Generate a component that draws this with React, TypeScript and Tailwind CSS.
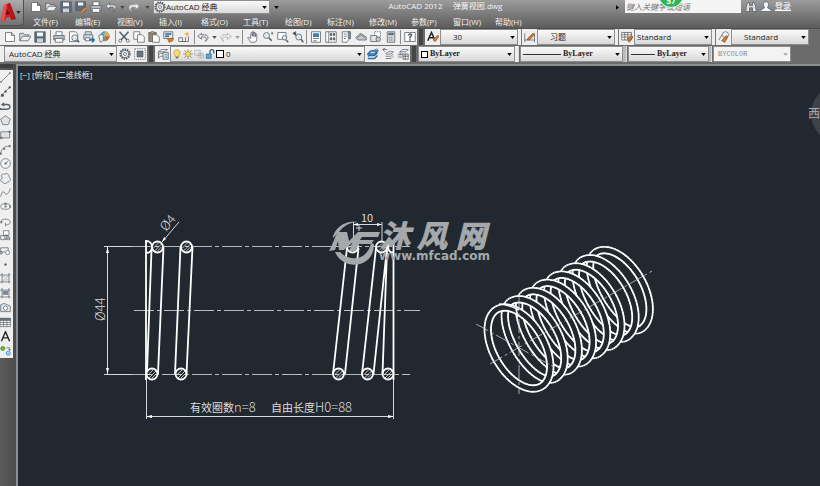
import type { ReactNode } from "react";

const UI_FONT = "font-['Open_Sans','Noto_Sans_CJK_SC',sans-serif]";

type IconName = keyof typeof ICONS;

// 16x16 drawings, dark strokes by default
const ICONS = {
  newFile: <path d="M2 2h8l4 4v8H2z M10 2v4h4" fill="#fff" />,
  open: (
    <>
      <path d="M1 13V3h5l1 2h6v2" fill="#d5dade" />
      <path d="M1 13l4-6h11l-4 6z" fill="#eef0f2" />
    </>
  ),
  save: (
    <>
      <path d="M1 1h14v14H1z" fill="#5b6b7c" />
      <path d="M4 2h8v5H4z" fill="#f4f6f8" stroke="none" />
      <path d="M4 10h8v5H4z" fill="#c9d2da" stroke="none" />
    </>
  ),
  saveAs: (
    <>
      <path d="M1 1h13v12H1z" fill="#5b6b7c" />
      <path d="M4 2h7v4H4z" fill="#f4f6f8" stroke="none" />
      <path d="M7 15l7-7 2 2-7 6z" fill="#e39a3b" stroke="#a4621c" />
    </>
  ),
  print: (
    <>
      <path d="M4 6V1h8v5" fill="#fff" />
      <path d="M1 6h14v6H1z" fill="#b4bac0" />
      <path d="M3 10h10v5H3z" fill="#fff" />
    </>
  ),
  preview: (
    <>
      <path d="M2 1h8l3 3v10H2z" fill="#fff" />
      <circle cx="9" cy="9" r="4" fill="#dfeaf3" />
      <path d="M12 12l3 3" strokeWidth="2" />
    </>
  ),
  publish: (
    <>
      <path d="M3 5V1h8v4 M1 5h12v6H1z" fill="#d7dbdf" />
      <path d="M3 9h6v4H3z" fill="#fff" />
      <path d="M8 12h7M12 9l3 3-3 3" stroke="#1c6fb8" strokeWidth="2" />
    </>
  ),
  globe: (
    <>
      <circle cx="9" cy="7" r="6" fill="#6db6e8" stroke="#3c7bb0" />
      <path d="M9 1a6 6 0 0 1 6 6H9z" fill="#e4b23c" stroke="none" />
      <path d="M9 7h6a6 6 0 0 1-5 6z" fill="#d9603f" stroke="none" />
      <path d="M1 6l6-2v9l-4 2z" fill="#f4f6f8" />
      <path d="M9 7l1 6-3 0z" fill="#60a84c" stroke="none" />
    </>
  ),
  cut: (
    <>
      <path d="M2 1l10 11M14 1L4 12" strokeWidth="2" />
      <circle cx="3" cy="13" r="2" />
      <circle cx="13" cy="13" r="2" />
    </>
  ),
  copy: (
    <>
      <path d="M1 1h8v10H1z" fill="#fff" />
      <path d="M6 5h6l3 3v7H6z" fill="#fff" />
    </>
  ),
  paste: (
    <>
      <path d="M1 2h10v12H1z" fill="#a5825a" />
      <path d="M4 1h4v2H4z" fill="#dfe3e6" />
      <path d="M6 5h6l3 3v7H6z" fill="#fff" />
    </>
  ),
  match: (
    <>
      <path d="M1 1h12v9H1z" fill="#dfe7ee" />
      <path d="M3 4h8M3 7h5" stroke="#33628f" strokeWidth="2" />
      <path d="M6 10h8l-1 3-5 2z" fill="#d98332" stroke="#9a531a" />
    </>
  ),
  block: (
    <>
      <path d="M1 9h5v5H1zM10 8v6H6" />
      <path d="M4 14h10V7" />
      <path d="M12 0l1 3 3 1-3 1-1 3-1-3-3-1 3-1z" fill="#f3a33c" stroke="none" />
    </>
  ),
  undo: <path d="M6 3L1 7l5 4V8h4c3 0 3 4 1 6 5-3 5-9-1-9H6z" fill="#e4e7ea" />,
  redo: <path d="M10 3l5 4-5 4V8H6c-3 0-3 4-1 6C0 11 0 5 6 5h4z" fill="#f1f1f1" stroke="#a2a6aa" />,
  hand: <path d="M5 15L1 9l1-1 3 2V3l1-1 1 1v4-6h2v6-5h2v6-4h2v8l-2 3z" fill="#fff" />,
  zoomRt: (
    <>
      <circle cx="6" cy="6" r="4" fill="#dfe8ef" />
      <path d="M9 9l4 4" strokeWidth="2" />
      <path d="M12 3h3M13.500 1v4" />
    </>
  ),
  zoomWin: (
    <>
      <path d="M1 2h11v9H1z" fill="#fff" />
      <circle cx="10" cy="9" r="3" fill="#dfe8ef" />
      <path d="M12 12l3 3" strokeWidth="2" />
    </>
  ),
  zoomPrev: (
    <>
      <circle cx="9" cy="8" r="4" fill="#dfe8ef" />
      <path d="M12 11l3 4" strokeWidth="2" />
      <path d="M1 3l4-2v5z" fill="#33383d" />
    </>
  ),
  props: (
    <>
      <path d="M2 1h12v14H2z" fill="#fff" />
      <path d="M4 3h8v5H4z" fill="#3d7fb8" stroke="none" />
      <path d="M4 10h8M4 13h5" />
    </>
  ),
  center: (
    <>
      <path d="M1 1h14v14H1zM5 1v14" fill="#fff" />
      <path d="M7 3h2v3H7zM11 3h2v3h-2zM7 9h2v3H7zM11 9h2v3h-2z" fill="#5b6b7c" />
    </>
  ),
  palettes: (
    <>
      <path d="M3 1h10v9l-4 5H3z" fill="#fff" />
      <path d="M11 1h3v9h-3z" fill="#8793a0" />
      <path d="M5 4h4M5 7h4M5 10h3" />
    </>
  ),
  sheets: (
    <>
      <path d="M1 9l6-6 8 5v4H4z" fill="#c4c9ce" />
      <path d="M3 9l5-4 5 4" />
    </>
  ),
  markup: (
    <>
      <path d="M6 1h8v7H6z" fill="#fff" strokeDasharray="2 1" />
      <path d="M1 6h8v8H1z" fill="#e3e6e9" />
      <circle cx="11" cy="11" r="3" fill="#c6ccd2" />
    </>
  ),
  calc: (
    <>
      <path d="M3 1h10v14H3z" fill="#d5dade" />
      <path d="M5 3h6v2H5z" fill="#5b6b7c" />
      <path d="M5 9h6M5 12h6" strokeDasharray="2 1" />
    </>
  ),
  help: (
    <>
      <path d="M1 2h14v12H1z" fill="#fff" />
      <path d="M6 6c0-3 5-2 4 0L8 8v2M8 11v2" strokeWidth="2" />
    </>
  ),
  gear: (
    <>
      <circle cx="8" cy="8" r="6" fill="#e8eaec" strokeWidth="3" strokeDasharray="2 1" />
      <circle cx="8" cy="8" r="5" fill="#eef0f2" />
      <circle cx="8" cy="8" r="2" fill="#fff" />
    </>
  ),
  workspace: (
    <>
      <path d="M1 1h14v14H1z" fill="#fff" strokeDasharray="2 1" />
      <path d="M4 4h8v8H4z" fill="#68737e" />
    </>
  ),
  layers: (
    <>
      <path d="M2 5l4-3h8l-4 3zM2 9l3-2h5M2 13l3-2h3M2 5v9" fill="#fff" />
      <path d="M8 6h7v9H8z" fill="#dfe6ec" />
      <path d="M10 9h4M10 12h4" stroke="#2a6ca8" />
    </>
  ),
  layerCur: (
    <>
      <path d="M1 8l4-4h9l-4 4z" fill="#cfe3f3" stroke="#2a6ca8" strokeWidth="2" />
      <path d="M1 11l2-1h7l4-4M1 14h9l4-4" stroke="#2a6ca8" strokeWidth="2" />
      <path d="M8 4l5-3 2 2" />
    </>
  ),
  layerPrev: (
    <>
      <path d="M5 8l3-3h7l-3 3zM5 11h7l3-3M5 14h7l3-3" fill="#fff" />
      <path d="M1 2h6M1 2l3-2M1 2l3 3" />
    </>
  ),
  layerState: (
    <>
      <path d="M4 5l3-3h8l-3 3zM4 5v3h4M1 9h6M1 12h6" fill="#fff" />
      <path d="M8 8h7v7H8z" fill="#dfe3e7" />
      <path d="M8 11h7M11 8v7" />
    </>
  ),
  textStyle: (
    <>
      <path d="M1 13L6 2l4 9M3 9h5" strokeWidth="2" stroke="#1f2226" />
      <path d="M8 12l6-6 2 1-5 7z" fill="#d98332" stroke="#9a531a" />
    </>
  ),
  dimStyle: (
    <>
      <path d="M1 3v12M14 3v12M1 12h13" />
      <path d="M4 11l8-8 2 2-7 7z" fill="#c77a35" stroke="#8b4f1e" />
    </>
  ),
  tableStyle: (
    <>
      <path d="M1 2h13v10H1zM1 5h13M1 8h13M5 2v10M9 2v10" fill="#fff" />
      <path d="M8 11l6-5 2 2-5 7z" fill="#c77a35" stroke="#8b4f1e" />
    </>
  ),
  leaderStyle: (
    <>
      <path d="M1 12l5-8" />
      <circle cx="10" cy="5" r="4" fill="#fff" />
      <path d="M5 13l6-7 2 2-4 7z" fill="#c77a35" stroke="#8b4f1e" />
    </>
  ),
  line: <path d="M1 15L15 1M1 13v2h2M13 1h2v2" />,
  xline: (
    <>
      <path d="M1 15L15 1" />
      <path d="M2 12h3v3H2zM7 7h2v2H7zM13 1h2v2h-2z" fill="#3a3f44" />
    </>
  ),
  pline: <path d="M1 12h9c6 0 6-7 0-7H4M6 3L3 5l3 2M1 10v3" strokeWidth="2" stroke="#5d646b" />,
  polygon: <path d="M8 1l7 5-3 8H4L1 6z" fill="#dfe3e6" />,
  rect: <path d="M1 4h13v9H1zM0 12h3v2H0zM13 3h2v2h-2z" fill="#dfe3e6" />,
  arc: <path d="M1 15c0-7 5-12 13-12M0 13h2v2H0zM5 6h2v2H5zM13 2h2v2h-2z" />,
  circle: (
    <>
      <circle cx="8" cy="8" r="7" fill="#f5f6f7" />
      <path d="M8 8l4-4M7 7h2v2H7z" />
    </>
  ),
  cloud: <path d="M4 7C0 5 2 0 6 2c3-3 8 0 7 4 4 2 2 7-2 7-1 3-6 3-7 0-4 0-4-5 0-6z" fill="#eceef0" />,
  spline: <path d="M1 14c1-7 4-9 6-5s6 0 8-7" />,
  ellipse: (
    <>
      <ellipse cx="8" cy="8" rx="7" ry="4" fill="#f5f6f7" />
      <path d="M7 7h2v2H7zM7 3h2v2H7zM14 7h2v2h-2z" />
    </>
  ),
  ellArc: <path d="M2 9c-2-6 13-6 13 0 0 3-4 4-7 4M8 10v5M1 8h2v2H1z" />,
  insBlock: (
    <>
      <path d="M5 1h8v7H5z" fill="#fff" />
      <path d="M1 8h8v6H1zM9 8l5 5M14 10v4h-4" fill="#eceef0" />
      <circle cx="9" cy="10" r="3" />
    </>
  ),
  mkBlock: (
    <>
      <path d="M1 10V4h11v4M1 10h6" fill="#eceef0" />
      <circle cx="11" cy="11" r="3" fill="#fff" />
      <path d="M0 10h3v3H0z" />
    </>
  ),
  point: <path d="M7 7h2v2H7z" fill="#3a3f44" />,
  hatch: (
    <>
      <path d="M3 0v15M0 3h15M13 0v15M0 13h15" />
      <path d="M4 7l3-3M4 12l8-8M8 12l4-4" stroke="#8b949c" />
    </>
  ),
  gradient: (
    <>
      <path d="M3 0v15M0 3h15M13 0v15M0 13h15" />
      <path d="M4 4h8v6H4z" fill="#7e8994" stroke="none" />
    </>
  ),
  region: (
    <>
      <path d="M1 14V4l5-2 9 4v8z" fill="#dfe3e6" />
      <circle cx="8" cy="9" r="3" fill="#fff" />
    </>
  ),
  table: (
    <>
      <path d="M0 2h15v12H0zM0 8h15M0 11h15M5 5v9M10 5v9" fill="#fff" />
      <path d="M0 2h15v3H0z" fill="#6a7580" />
    </>
  ),
  mtext: <path d="M2 15L8 1l6 14M4 10h8" strokeWidth="2" stroke="#1f2226" />,
  addSel: (
    <>
      <circle cx="4" cy="5" r="3" fill="#6cb23e" stroke="#4b8b27" />
      <path d="M9 4h5v4M12 6l2 2 2-2" />
      <circle cx="12" cy="12" r="3" fill="#a8d4f5" stroke="#2a7fc4" />
    </>
  ),
  bulb: (
    <>
      <path d="M8 1a5 5 0 0 1 3 9v2H5v-2a5 5 0 0 1 3-9z" fill="#f7dc6c" stroke="#a58a2d" />
      <path d="M6 14h4" strokeWidth="2" />
    </>
  ),
  sun: (
    <>
      <path d="M8 0v16M0 8h16M2 2l12 12M14 2L2 14" stroke="#7b6b35" />
      <circle cx="8" cy="8" r="4" fill="#f7dc6c" stroke="#a58a2d" />
    </>
  ),
  vpFreeze: (
    <>
      <path d="M1 2h9v8H1z" fill="#e6e6e6" stroke="#a2a6aa" />
      <path d="M7 7h8v7H7zM11 6v9M6 10h10" stroke="#a2a6aa" />
    </>
  ),
  lock: (
    <>
      <path d="M2 8h8v7H2z" fill="#58a5dc" stroke="#28648f" />
      <path d="M8 8V4c0-4 6-4 6 0v3" strokeWidth="2" stroke="#3a5f7a" />
    </>
  ),
  binoculars: (
    <path d="M2 6l2-4h2v4h4V2h2l2 4 1 8h-5V9H6v5H1z" fill="#dfe3e7" />
  ),
  user: <path d="M8 1c4 0 4 4 2 8l5 3v2H1v-2l5-3C4 5 4 1 8 1z" fill="#f5f6f7" />,
} satisfies Record<string, ReactNode>;

function Icon({ name, className = "size-3" }: { name: IconName; className?: string }) {
  return (
    <svg viewBox="0 0 16 16" aria-hidden="true" className={`${className} shrink-0`} fill="none" stroke="#565d65" strokeWidth="1">
      {ICONS[name]}
    </svg>
  );
}

function Caret({ className = "text-black" }: { className?: string }) {
  return (
    <svg viewBox="0 0 6 4" aria-hidden="true" className={`h-[3px] w-[5px] shrink-0 ${className}`}>
      <path d="M0 0h6L3 4z" fill="currentColor" />
    </svg>
  );
}

function Tool({ name }: { name: IconName }) {
  return (
    <button type="button" aria-label={name} className="flex w-[15px] shrink-0 items-center justify-center">
      <Icon name={name} />
    </button>
  );
}

const Divider = () => <span className="my-px w-px shrink-0 bg-[#8b8b8b]" />;
const Grip = () => <span className="w-2 shrink-0 border-x-2 border-[#6b6b6b] bg-[#454545]" />;

type ComboProps = {
  label: string;
  value: string;
  className: string;
  selectClass?: string;
  disabled?: boolean;
  children?: ReactNode;
};

function Combo({ label, value, className, selectClass = "", disabled, children }: ComboProps) {
  return (
    <label
      className={`flex shrink-0 items-center border border-[#8d8d8d] pr-[2px] ${
        disabled ? "bg-[#f3f3f3] text-[#8a8a8a]" : "bg-linear-to-b from-[#fafafa] to-[#d9d9d9] text-[#1d1d1d]"
      } ${className}`}
    >
      {children}
      <select
        aria-label={label}
        disabled={disabled}
        className={`h-full min-w-0 flex-1 appearance-none bg-transparent outline-none ${selectClass}`}
      >
        <option>{value}</option>
      </select>
      <Caret className={disabled ? "text-[#aaa]" : "text-black"} />
    </label>
  );
}

const MENUS = [
  "文件(F)", "编辑(E)", "视图(V)", "插入(I)", "格式(O)", "工具(T)",
  "绘图(D)", "标注(N)", "修改(M)", "参数(P)", "窗口(W)", "帮助(H)",
];

const DRAW_TOOLS: IconName[] = [
  "line", "xline", "pline", "polygon", "rect", "arc", "circle", "cloud", "spline", "ellipse",
  "ellArc", "insBlock", "mkBlock", "point", "hatch", "gradient", "region", "table", "mtext", "addSel",
];

function TitleBar() {
  return (
    <header className="relative flex h-[29px] overflow-hidden border-b border-[#4d4d4d] bg-linear-to-b from-[#9c9c9c] via-[#7b7b7b] to-[#5c5c5c]">
      <button
        type="button"
        aria-label="应用程序菜单"
        className="flex h-[26px] w-6 shrink-0 items-center justify-between rounded-br-sm border-r border-b border-[#4f4f4f] bg-linear-to-b from-[#adadad] to-[#727272] pr-[2px]"
      >
        <svg viewBox="0 0 16 24" className="h-6 w-4" aria-hidden="true">
          <path d="M1 21L4 4l6-2 6 16-5 1-1-3-4 1-1 3z" fill="#d3222a" />
          <path d="M7 3l3-1 6 16-5 1z" fill="#b3161e" />
          <path d="M1 21L4 4l3-1-3 17z" fill="#ee4f4a" />
          <path d="M6 14l1-6 3 5z" fill="#6b0d11" />
        </svg>
        <Caret className="text-[#2d2d2d]" />
      </button>
      <div className="flex min-w-0 flex-1 flex-col pl-1">
        <div className="flex h-[14px] items-stretch">
          <div className="flex items-stretch">
            {(["newFile", "open", "save", "saveAs", "print", "undo"] as IconName[]).map((n) => (
              <Tool key={n} name={n} />
            ))}
            <span className="flex w-2 items-center justify-center"><Caret className="text-[#4a4a4a]" /></span>
            <Tool name="redo" />
            <span className="flex w-3 items-center justify-center"><Caret className="text-[#4a4a4a]" /></span>
          </div>
          <Combo label="工作空间" value="AutoCAD 经典" className="w-[117px] text-[8px]">
            <Icon name="gear" />
          </Combo>
          <button type="button" aria-label="自定义快速访问工具栏" className="flex w-3 items-center justify-center">
            <Caret />
          </button>
          <h1 className="flex-1 text-center text-[8px] leading-3 whitespace-pre text-[#f2f2f2]">
            {"AutoCAD 2012     弹簧视图.dwg"}
          </h1>
          <button type="button" aria-label="展开搜索" className="flex w-4 items-center justify-center">
            <svg viewBox="0 0 4 6" className="h-[5px] w-[3px]" aria-hidden="true"><path d="M0 0v6l4-3z" /></svg>
          </button>
          <div className="relative h-[13px] w-[116px]">
            <input
              type="search"
              aria-label="搜索"
              placeholder="键入关键字或短语"
              className="block h-full w-full bg-[#f4f4f4] px-px text-[8px] italic outline-none placeholder:text-[#777]"
            />
            <span className="absolute -top-[18px] left-[33px] flex size-[26px] items-end justify-center rounded-full border border-[#e4f5e5] bg-[#2fb457] pb-[2px] text-[8px] leading-[8px] font-bold text-white">
              57
            </span>
          </div>
          <div className="flex w-[79px] items-stretch pl-[2px]">
            <Tool name="binoculars" />
            <Tool name="user" />
            <a href="#login" className="pl-[2px] text-[8px] leading-3 text-white underline">登录</a>
          </div>
        </div>
        <nav className="flex items-center pt-[2px] pl-[5px]">
          {MENUS.map((m) => (
            <a key={m} href="#menu" className="w-[42px] shrink-0 text-[8px] leading-3 text-[#f0f0f0]">
              {m}
            </a>
          ))}
        </nav>
      </div>
    </header>
  );
}

function StandardBar() {
  return (
    <div className="flex h-4 items-stretch bg-[#6b6b6b] text-[8px]">
      <div className="flex bg-[#efefef] pl-[2px]">
        {(["newFile", "open", "save"] as IconName[]).map((n) => <Tool key={n} name={n} />)}
        <span className="w-[3px]" />
        <Divider />
        {(["print", "preview", "publish", "globe"] as IconName[]).map((n) => <Tool key={n} name={n} />)}
        <span className="w-1" />
        <Divider />
        {(["cut", "copy", "paste", "match", "block"] as IconName[]).map((n) => <Tool key={n} name={n} />)}
        <span className="w-[3px]" />
        <Divider />
        <Tool name="undo" />
        <span className="flex w-2 items-center justify-center"><Caret className="text-[#555]" /></span>
        <Tool name="redo" />
        <span className="flex w-2 items-center justify-center"><Caret className="text-[#999]" /></span>
        <span className="w-px" />
        <Divider />
        <span className="w-[2px]" />
        {(["hand", "zoomRt", "zoomWin", "zoomPrev"] as IconName[]).map((n) => <Tool key={n} name={n} />)}
        <span className="w-px" />
        <Divider />
        <span className="w-px" />
        {(["props", "center", "palettes", "sheets", "markup", "calc"] as IconName[]).map((n) => <Tool key={n} name={n} />)}
        <span className="w-[2px]" />
        <Divider />
        <span className="w-px" />
        <Tool name="help" />
      </div>
      <Grip />
      <div className="flex bg-[#efefef]">
        <Tool name="textStyle" />
        <Combo label="文字样式" value="30" className="w-[78px]" selectClass="pl-3" />
        <span className="w-1 border-r border-[#777]" />
        <Tool name="dimStyle" />
        <Combo label="标注样式" value="习题" className="w-[78px]" selectClass="pl-3" />
        <span className="w-1 border-r border-[#777]" />
        <Tool name="tableStyle" />
        <Combo label="表格样式" value="Standard" className="w-[78px]" selectClass="pl-[2px]" />
        <span className="w-1 border-r border-[#777]" />
        <Tool name="leaderStyle" />
        <Combo label="多重引线样式" value="Standard" className="w-[78px]" selectClass="pl-3" />
      </div>
    </div>
  );
}

const BYLAYER = "font-['Liberation_Serif',serif] font-bold text-[8px]";

function LayerBar() {
  return (
    <div className="flex h-4 items-stretch bg-[#6b6b6b] text-[8px]">
      <div className="flex bg-[#efefef] pl-1">
        <Combo label="工作空间" value="AutoCAD 经典" className="w-[113px]" selectClass="pl-1" />
        <Tool name="gear" />
        <Tool name="workspace" />
      </div>
      <Grip />
      <div className="flex bg-[#efefef]">
        <Tool name="layers" />
        <Combo label="图层" value="0" className="w-[195px]" selectClass="pl-[2px]">
          <span className="flex items-center gap-px pl-px">
            <Icon name="bulb" className="size-[10px]" />
            <Icon name="sun" className="size-[10px]" />
            <Icon name="vpFreeze" className="size-[10px]" />
            <Icon name="lock" className="size-[10px]" />
            <span className="size-2 border border-black bg-white" />
          </span>
        </Combo>
        <Tool name="layerCur" />
        <Tool name="layerPrev" />
        <Tool name="layerState" />
      </div>
      <Grip />
      <div className="flex">
        <Combo label="颜色" value="ByLayer" className="w-[97px]" selectClass={`pl-[2px] ${BYLAYER}`}>
          <span className="ml-[2px] size-[7px] border border-black bg-white" />
        </Combo>
        <span className="mr-px w-1 border-r border-[#ddd] bg-[#efefef]" />
        <Combo label="线型" value="ByLayer" className="w-[103px]" selectClass={`pl-[2px] ${BYLAYER}`}>
          <span className="ml-[2px] h-px w-[38px] bg-[#333]" />
        </Combo>
        <span className="mr-px w-1 border-r border-[#ddd] bg-[#bbb]" />
        <Combo label="线宽" value="ByLayer" className="w-[81px]" selectClass={`pl-[2px] ${BYLAYER}`}>
          <span className="ml-[2px] h-px w-6 bg-[#333]" />
        </Combo>
        <span className="mr-px w-[3px] border-r border-[#ddd] bg-[#bbb]" />
        <Combo
          label="打印样式"
          value="BYCOLOR"
          disabled
          className="w-[78px]"
          selectClass="pl-1 font-['Liberation_Mono',monospace] text-[7px]"
        />
      </div>
    </div>
  );
}

// ---- isometric coil ----

const COIL = { cx: 519, cy: 348, r: 44.5, turns: 7, pitch: 20 };
const STEPS = 80;

type Seg = { x1: number; y1: number; x2: number; y2: number; depth: number };

// turn t: 0 = top end of the major axis, 0.5 = bottom end, near side in between
function coilPoint(t: number, s: number) {
  const a = t * 2 * Math.PI;
  const major = -Math.cos(a) * COIL.r;
  const side = Math.sin(a) * COIL.r;
  const along = side * 0.57 + s * COIL.pitch * 0.82;
  return {
    x: COIL.cx + major * 0.5 + along * 0.866,
    y: COIL.cy + major * 0.866 - along * 0.5,
    depth: s * COIL.pitch * 0.577 - side * 0.816,
  };
}

function buildCoil(): Seg[] {
  const segs: Seg[] = [];
  for (let k = 0; k <= COIL.turns; k++) {
    // the wire leans back on the far side; the ground end coil stays flat
    const lean = k === 0 ? 0 : 0.3;
    const shift = (t: number) => k + lean * Math.max(0, -Math.sin(t * 2 * Math.PI));
    for (let i = 0; i < STEPS; i++) {
      const t0 = i / STEPS;
      const t1 = (i + 1.3) / STEPS;
      const p = coilPoint(t0, shift(t0));
      const q = coilPoint(t1, shift(t1));
      segs.push({ x1: p.x, y1: p.y, x2: q.x, y2: q.y, depth: (p.depth + q.depth) / 2 });
    }
  }
  return segs.sort((a, b) => b.depth - a.depth);
}

const coilSegs = buildCoil();

function Coil() {
  return (
    <g>
      {coilSegs.map((s, i) => (
        <g key={i}>
          <line x1={s.x1} y1={s.y1} x2={s.x2} y2={s.y2} stroke="#fff" strokeWidth="8.2" />
          <line x1={s.x1} y1={s.y1} x2={s.x2} y2={s.y2} stroke="#222830" strokeWidth="4.6" strokeLinecap="round" />
        </g>
      ))}
      <path d="M499 304c8 0 14 3 20 6M516 309l2 8" fill="none" stroke="#fff" strokeWidth="1.6" />
      <g stroke="#c8cbce" strokeWidth="0.8" strokeDasharray="14 3 3 3">
        <path d="M490 364L652 271" />
        <path d="M476 324l78 43" />
        <path d="M519 296v98" />
      </g>
    </g>
  );
}

const WIRE_ENDS = [
  [157.5, 247], [186.5, 247], [352.5, 247], [381.5, 247],
  [152, 374], [181, 374], [338.5, 374], [367.5, 374], [388, 374],
];

function Section() {
  return (
    <g fill="none">
      <g stroke="#b9bcbf" strokeWidth="1" strokeDasharray="20 3 4 3">
        <path d="M132 246.500h278M134 310.500h286M132 374.500h278" />
      </g>
      <g stroke="#d5d7d9" strokeWidth="1">
        <path d="M104 246.500h28M104 374.500h28M107.500 247v127M146.500 380v39M393.500 380v39M146 416.500h248" />
        <path d="M353.500 222v24M382 222v20M353.500 224.500h28M162 242l17-20" />
      </g>
      <path
        fill="#fff"
        d="M107.500 247l-1.500 6h3zM107.500 374l-1.500-6h3zM146 416.500l6-1.500v3zM394 416.500l-6-1.500v3zM353 224.500l5-1.500v3zM382 224.500l-5-1.500v3zM162 242l2-5 2 2z"
      />
      <g stroke="#fff" strokeWidth="1.8">
        {WIRE_ENDS.map(([x, y]) => (
          <g key={`${x}-${y}`}>
            <circle cx={x} cy={y} r="5.500" />
            <path d={`M${x - 4} ${y + 1}l5-5M${x - 3} ${y + 4}l7-7M${x} ${y + 4}l4-4`} strokeWidth="0.7" />
          </g>
        ))}
        <path d="M146 380V241c8 0 8 12 0 12M393.500 380V241c-7 1-7 11 0 12" />
        <path d="M151.500 250L147 372M163.500 247L158 374M180.500 247L175 374M192.500 247L186.500 374" />
        <path d="M347 248L333 374M358.500 248L345 374M376 248L362 374M387 248L373.500 374M387 250L382.500 374" />
      </g>
      <g fill="#dcdddf" className="font-['Noto_Sans_CJK_SC',sans-serif] text-[11px]">
        <text transform="translate(105 321) rotate(-90)" className="text-[13px] font-light">Ø44</text>
        <text transform="translate(166 232) rotate(-50)" className="text-[13px] font-light">Ø4</text>
        <text x="361" y="222">10</text>
        <text x="190" y="412">有效圈数<tspan className="text-[13px] font-light">n=8</tspan></text>
        <text x="271" y="412">自由长度<tspan className="text-[13px] font-light">H0=88</tspan></text>
      </g>
    </g>
  );
}

function Watermark() {
  return (
    <g fill="#a5a9ac">
      <path d="M333 236a22 22 0 0 1 25-14 24 22 0 0 0-19 10l-6 6z" />
      <path d="M335 252h5c8 9 27 10 31-9l3 1c0 25-31 27-39 8z" />
      <path d="M329 251c4-7 5-13 9-19h9l2 9 9-9h22l-2 5h-16l-2 3h14l-3 4h-12l-4 7h-6l4-9-9 8h-5l-1-9-3 9z" />
      <path d="M359 225v6M356 228h6" stroke="#d5d7d9" strokeWidth="1" />
      <g stroke="#a5a9ac" strokeWidth="1" className="font-['Noto_Sans_CJK_SC',sans-serif] text-[30px] font-bold italic">
        <text x="380" y="247">沐</text>
        <text x="417" y="247">风</text>
        <text x="456" y="247">网</text>
      </g>
      <text x="379" y="260" className="font-['DejaVu_Sans',sans-serif] text-[12px] font-bold">www.mfcad.com</text>
    </g>
  );
}

export default function App() {
  return (
    <div className={`flex min-h-screen flex-col overflow-hidden bg-[#6b6b6b] leading-none ${UI_FONT}`}>
      <TitleBar />
      <div className="flex flex-col gap-px">
        <StandardBar />
        <LayerBar />
      </div>
      <div className="flex flex-1 pt-[2px]">
        <aside className="w-4 shrink-0 bg-linear-to-r from-[#5c5c5c] to-[#4b4b4b]">
          <div className="mb-[2px] h-1 w-[13px] bg-[#3f3f3f]" />
          <div className="flex h-[288px] w-[13px] flex-col bg-[#efefef]">
            {DRAW_TOOLS.map((n) => (
              <button key={n} type="button" aria-label={n} className="flex flex-1 items-center">
                <Icon name={n} className="size-[11px]" />
              </button>
            ))}
          </div>
        </aside>
        <main className="relative flex-1 overflow-hidden border-t-2 border-l-2 border-[#8a8e8e] bg-[#222830]">
          <svg viewBox="18 66 802 420" className="block w-full" role="img" aria-label="弹簧视图">
            <Section />
            <Coil />
            <Watermark />
          </svg>
          <p className="absolute top-[3px] left-[2px] text-[8px] leading-3 text-[#e8e8e8]">[−] [俯视] [二维线框]</p>
          <div className="absolute top-[19px] -right-[49px] size-[58px] rounded-full bg-[#3e434a]" />
          <span className="absolute top-[40px] right-0 text-[12px] leading-4 text-[#a9abad]">西</span>
        </main>
      </div>
    </div>
  );
}
